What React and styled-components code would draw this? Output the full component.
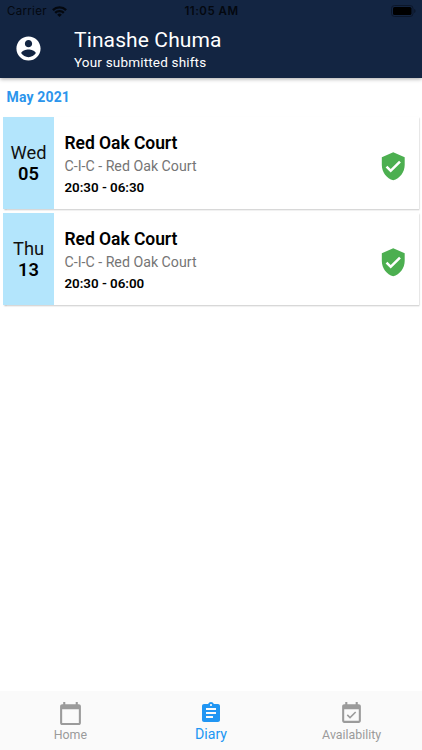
import React from "react";
import styled, { createGlobalStyle } from "styled-components";

const GlobalStyle = createGlobalStyle`
  * { box-sizing: border-box; }
  body { margin: 0; background: #fff; font-family: Roboto, sans-serif; }
`;

const Screen = styled.div`
  display: flex;
  flex-direction: column;
  width: 422px;
  height: 750px;
  overflow: hidden;
  background: #fff;
`;

const Header = styled.header`
  flex: none;
  height: 78px;
  background: #132542;
  box-shadow: 0 1px 4px rgba(0, 0, 0, 0.35);
`;

const StatusBar = styled.div`
  display: grid;
  grid-template-columns: 1fr auto 1fr;
  align-items: center;
  height: 22px;
  padding: 0 6px 0 7px;
  font-family: Inter, sans-serif;
  font-size: 11.5px;
  line-height: 22px;
  color: #04080f;
`;

const Carrier = styled.div`
  display: flex;
  align-items: center;
  gap: 5px;
  letter-spacing: 0.3px;
`;

const Clock = styled.div`
  font-weight: 600;
  letter-spacing: 0.5px;
`;

const BatterySlot = styled.div`
  display: flex;
  justify-content: flex-end;
`;

const Toolbar = styled.div`
  display: flex;
  align-items: flex-start;
  padding-left: 14px;
`;

const Avatar = styled.div`
  display: flex;
  width: 60px;
  padding-top: 12px;
  color: #fff;
`;

const Heading = styled.h1`
  margin: 4px 0 0;
  font-size: 21px;
  font-weight: 400;
  line-height: 28px;
  letter-spacing: 0.12px;
  color: #fff;
`;

const Subheading = styled.p`
  margin: 0;
  font-size: 13.5px;
  line-height: 16px;
  letter-spacing: 0.18px;
  color: #fff;
`;

const Content = styled.main`
  flex: 1;
  padding: 0 3px;
`;

const Month = styled.h2`
  margin: 0;
  padding: 10px 0 0 3.5px;
  height: 39px;
  font-size: 14px;
  font-weight: 700;
  line-height: 19px;
  letter-spacing: 0.15px;
  color: #2b95ec;
`;

const ShiftList = styled.div`
  display: flex;
  flex-direction: column;
  gap: 4px;
`;

const ShiftCard = styled.article`
  display: flex;
  align-items: center;
  height: 92px;
  padding-right: 10.5px;
  background: #fff;
  box-shadow: 0.5px 1px 1.5px rgba(0, 0, 0, 0.25);
`;

const DateBlock = styled.div`
  display: flex;
  flex-direction: column;
  align-items: center;
  justify-content: center;
  width: 51px;
  height: 100%;
  background: #b3e5fc;
  font-size: 18.3px;
  line-height: 21px;
  color: #111;
`;

const DayNumber = styled.strong`
  font-weight: 600;
  color: #000;
`;

const Details = styled.div`
  flex: 1;
  padding: 3px 0 0 10.5px;
`;

const Place = styled.div`
  font-size: 17.5px;
  font-weight: 600;
  line-height: 24px;
  letter-spacing: -0.05px;
  color: #000;
`;

const Unit = styled.div`
  font-size: 14.2px;
  line-height: 22px;
  color: #757575;
`;

const Hours = styled.div`
  font-size: 13.4px;
  font-weight: 600;
  line-height: 21px;
  letter-spacing: -0.03px;
  color: #000;
`;

const Status = styled.div`
  display: flex;
  padding-top: 6px;
  color: #4caf50;
`;

const NavBar = styled.nav`
  display: grid;
  grid-template-columns: repeat(3, 1fr);
  flex: none;
  height: 59px;
  background: #fafafa;
`;

const NavItem = styled.div`
  display: flex;
  flex-direction: column;
  align-items: center;
  padding-top: 9px;
  color: ${(p) => (p.$active ? "#2196f3" : "#9b9b9b")};
  font-size: ${(p) => (p.$active ? "14.2px" : "12.4px")};
`;

const NavIcon = styled.div`
  display: flex;
  align-items: center;
  justify-content: center;
  height: 26px;
`;

const NavLabel = styled.span`
  line-height: ${(p) => (p.$active ? "16px" : "18px")};
`;

const ICONS = {
  account:
    "M12 2C6.48 2 2 6.48 2 12s4.48 10 10 10 10-4.48 10-10S17.52 2 12 2zm0 3c1.66 0 3 1.34 3 3s-1.34 3-3 3-3-1.34-3-3 1.34-3 3-3zm0 14.2c-2.5 0-4.71-1.28-6-3.22.03-1.99 4-3.08 6-3.08 1.99 0 5.97 1.09 6 3.08-1.29 1.94-3.5 3.22-6 3.22z",
  shield:
    "M12 1L3 5v6c0 5.55 3.84 10.74 9 12 5.16-1.26 9-6.45 9-12V5l-9-4zm-2 16l-4-4 1.41-1.41L10 14.17l6.59-6.59L18 9l-8 8z",
  calendar:
    "M20 3h-1V1h-2v2H7V1H5v2H4c-1.1 0-2 .9-2 2v16c0 1.1.9 2 2 2h16c1.1 0 2-.9 2-2V5c0-1.1-.9-2-2-2zm0 18H4V8h16v13z",
  assignment:
    "M19 3h-4.18C14.4 1.84 13.3 1 12 1c-1.3 0-2.4.84-2.82 2H5c-1.1 0-2 .9-2 2v14c0 1.1.9 2 2 2h14c1.1 0 2-.9 2-2V5c0-1.1-.9-2-2-2zm-7 0c.55 0 1 .45 1 1s-.45 1-1 1-1-.45-1-1 .45-1 1-1zm2 14H7v-2h7v2zm3-4H7v-2h10v2zm0-4H7V7h10v2z",
  available:
    "M16.53 11.06L15.47 10l-4.88 4.88-2.12-2.12-1.06 1.06L10.59 17l5.94-5.94zM19 3h-1V1h-2v2H8V1H6v2H5c-1.11 0-1.99.9-1.99 2L3 19c0 1.1.89 2 2 2h14c1.1 0 2-.9 2-2V5c0-1.1-.9-2-2-2zm0 16H5V8h14v11z",
};

const Icon = ({ name, size }) => (
  <svg width={size} height={size} viewBox="0 0 24 24" fill="currentColor">
    <path d={ICONS[name]} />
  </svg>
);

const Wifi = () => (
  <svg width="15" height="11" viewBox="0 0 15 11" fill="none" stroke="currentColor" strokeWidth="2.4">
    <path d="M0.9 4.1a9.4 9.4 0 0 1 13.2 0" />
    <path d="M3.2 6.9a6.1 6.1 0 0 1 8.6 0" />
    <path d="M5.2 8.7a3.3 3.3 0 0 1 4.6 0L7.5 11z" fill="currentColor" stroke="none" />
  </svg>
);

const Battery = () => (
  <svg width="25" height="12" viewBox="0 0 25 12">
    <rect x="0.5" y="0.5" width="21.5" height="11" rx="3" fill="none" stroke="#0c172a" />
    <rect x="2" y="2" width="18.5" height="8" rx="1.6" fill="#000" />
    <path d="M23.2 4v4c.8-.3 1.3-1.1 1.3-2s-.5-1.7-1.3-2z" fill="#0c172a" />
  </svg>
);

const shifts = [
  { day: "Wed", date: "05", place: "Red Oak Court", unit: "C-I-C - Red Oak Court", hours: "20:30 - 06:30" },
  { day: "Thu", date: "13", place: "Red Oak Court", unit: "C-I-C - Red Oak Court", hours: "20:30 - 06:00" },
];

const tabs = [
  { label: "Home", icon: "calendar", size: 25 },
  { label: "Diary", icon: "assignment", size: 24 },
  { label: "Availability", icon: "available", size: 25 },
];

const activeTab = "Diary";

export default function App() {
  return (
    <Screen>
      <GlobalStyle />
      <Header>
        <StatusBar>
          <Carrier>
            Carrier <Wifi />
          </Carrier>
          <Clock>11:05 AM</Clock>
          <BatterySlot>
            <Battery />
          </BatterySlot>
        </StatusBar>
        <Toolbar>
          <Avatar>
            <Icon name="account" size={29} />
          </Avatar>
          <div>
            <Heading>Tinashe Chuma</Heading>
            <Subheading>Your submitted shifts</Subheading>
          </div>
        </Toolbar>
      </Header>
      <Content>
        <Month>May 2021</Month>
        <ShiftList>
          {shifts.map((s) => (
            <ShiftCard key={s.date}>
              <DateBlock>
                <span>{s.day}</span>
                <DayNumber>{s.date}</DayNumber>
              </DateBlock>
              <Details>
                <Place>{s.place}</Place>
                <Unit>{s.unit}</Unit>
                <Hours>{s.hours}</Hours>
              </Details>
              <Status>
                <Icon name="shield" size={30.5} />
              </Status>
            </ShiftCard>
          ))}
        </ShiftList>
      </Content>
      <NavBar>
        {tabs.map((t) => (
          <NavItem key={t.label} $active={t.label === activeTab}>
            <NavIcon>
              <Icon name={t.icon} size={t.size} />
            </NavIcon>
            <NavLabel $active={t.label === activeTab}>{t.label}</NavLabel>
          </NavItem>
        ))}
      </NavBar>
    </Screen>
  );
}
